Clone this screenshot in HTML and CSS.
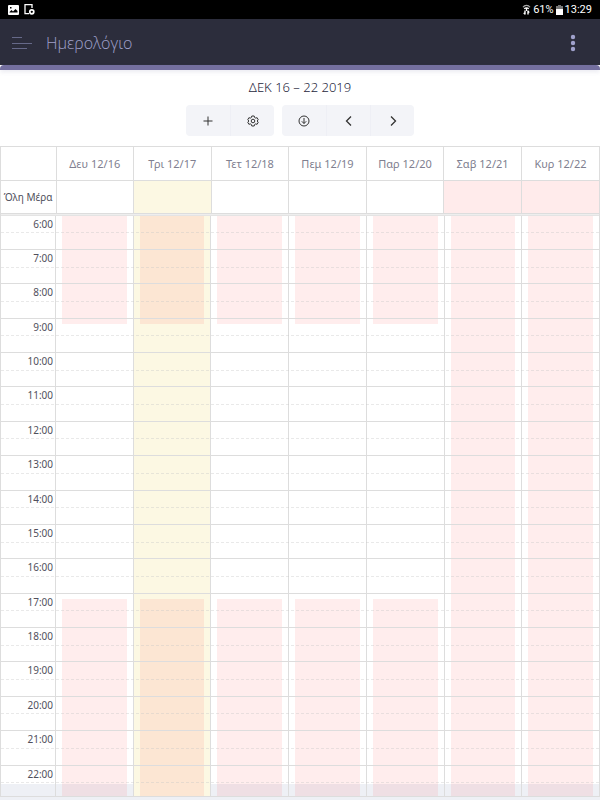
FILE: index.html
```html
<!DOCTYPE html>
<html lang="el">
<head>
  <meta charset="UTF-8">
  <meta name="viewport" content="width=device-width, initial-scale=1">
  <title>Ημερολόγιο</title>
  <link rel="stylesheet" href="styles.css">
</head>
<body>
  <div class="status-bar">
    <div class="status-left">
      <svg width="11" height="10" viewBox="0 0 11 10"><path fill="#fff" fill-rule="evenodd" d="M1 0h9a1 1 0 0 1 1 1v8a1 1 0 0 1-1 1H1a1 1 0 0 1-1-1V1a1 1 0 0 1 1-1zM1.500 7.500h8V6L7.500 4 5 6.500 3.500 5l-2 2zM2 2v1.500h1.500V2z"/></svg>
      <svg width="11" height="11" viewBox="0 0 11 11"><path fill="none" stroke="#fff" stroke-width="1.300" d="M8 4V.7H1v9h4"/><circle cx="7.800" cy="7.800" r="2" fill="none" stroke="#fff" stroke-width="1.700"/></svg>
    </div>
    <div class="status-right">
      <svg width="9" height="11" viewBox="0 0 9 11" fill="none" stroke="#fff"><path stroke="#aaa" stroke-width="1.200" d="M1 3.200C2.500.8 6.500.8 8 3.200"/><path stroke-width="1.300" d="M2.300 4.800c1-1.300 3.400-1.300 4.400 0M4.500 4.500v2.500"/><path stroke-width="1.400" d="M3 6.500v4M6 6.500v4M1.800 8.700 3 10.200M7.200 8.700 6 7"/></svg>
      <span>61%</span>
      <svg width="7" height="10" viewBox="0 0 7 10"><path fill="#777" d="M2 0h3v1h2v3H0V1h2z"/><path fill="#fff" d="M0 4h7v6H0z"/></svg>
      <span>13:29</span>
    </div>
  </div>
  <header class="app-bar">
    <button type="button" class="bar-button" aria-label="Μενού">
      <svg width="20" height="14" viewBox="0 0 20 14" stroke="#666989"><path d="M0 1.500h10M0 7.500h20M0 12.500h15"/></svg>
    </button>
    <h1>Ημερολόγιο</h1>
    <button type="button" class="bar-button" aria-label="Περισσότερα">
      <svg width="6" height="18" viewBox="0 0 6 18" fill="#a0a1cc"><circle cx="3" cy="3" r="2.200"/><circle cx="3" cy="9" r="2.200"/><circle cx="3" cy="15" r="2.200"/></svg>
    </button>
  </header>
  <main class="panel">
    <div class="accent"></div>
    <h2>ΔΕΚ 16 – 22 2019</h2>
    <div class="toolbar">
      <div class="button-group">
        <button type="button" aria-label="Προσθήκη"><svg width="12" height="12" viewBox="0 0 12 12"><path d="M6 1.500v9M1.500 6h9"/></svg></button>
        <button type="button" aria-label="Ρυθμίσεις"><svg width="12" height="12" viewBox="0 0 12 12"><path d="M4.800 1h2.400l.4 1.500 1.100.6 1.400-.4 1.100 2L10.200 6l1 1.300-1.100 2-1.400-.4-1.100.6-.4 1.500H4.800l-.4-1.500-1.100-.6-1.400.4-1.100-2L1.800 6l-1-1.300 1.100-2 1.400.4 1.100-.6z"/><circle cx="6" cy="6" r="1.800"/></svg></button>
      </div>
      <div class="button-group">
        <button type="button" aria-label="Σήμερα"><svg width="12" height="12" viewBox="0 0 12 12"><circle cx="6" cy="6" r="5"/><path d="M6 3v5.500M3.800 6.300 6 8.500l2.200-2.200"/></svg></button>
        <button type="button" aria-label="Προηγούμενη"><svg width="12" height="12" viewBox="0 0 12 12"><path stroke-width="1.300" d="M8 1.500 3.500 6 8 10.500"/></svg></button>
        <button type="button" aria-label="Επόμενη"><svg width="12" height="12" viewBox="0 0 12 12"><path stroke-width="1.300" d="M4 1.500 8.500 6 4 10.500"/></svg></button>
      </div>
    </div>
    <div class="calendar">
      <table class="days">
        <colgroup><col class="axis"><col span="7"></colgroup>
        <thead>
          <tr><td></td><th scope="col">Δευ 12/16</th><th scope="col">Τρι 12/17</th><th scope="col">Τετ 12/18</th><th scope="col">Πεμ 12/19</th><th scope="col">Παρ 12/20</th><th scope="col">Σαβ 12/21</th><th scope="col">Κυρ 12/22</th></tr>
        </thead>
        <tbody>
          <tr><th scope="row">Όλη Μέρα</th><td></td><td class="today"></td><td></td><td></td><td></td><td class="closed"></td><td class="closed"></td></tr>
        </tbody>
      </table>
      <div class="divider"></div>
      <div class="time-grid">
        <div class="grid-content">
          <div class="shades">
            <div class="day"><i class="early"></i><i class="late"></i></div>
            <div class="day today"><i class="early"></i><i class="late"></i></div>
            <div class="day"><i class="early"></i><i class="late"></i></div>
            <div class="day"><i class="early"></i><i class="late"></i></div>
            <div class="day"><i class="early"></i><i class="late"></i></div>
            <div class="day"><i class="all-day"></i></div>
            <div class="day"><i class="all-day"></i></div>
          </div>
          <div class="hours" id="hours"></div>
        </div>
      </div>
    </div>
  </main>
  <script>
    const hours = document.getElementById('hours');
    for (let h = 6; h <= 22; h++) {
      const row = document.createElement('div');
      row.className = 'hour';
      row.innerHTML = `<span>${h}:00</span>`;
      hours.appendChild(row);
    }
  </script>
</body>
</html>
```

FILE: styles.css
```css
* { box-sizing: border-box; }
body { margin: 0; height: 100vh; min-height: 640px; display: flex; flex-direction: column; overflow: hidden; background: #eef0f5; color: #50505c; font-family: "Noto Sans", "Open Sans", sans-serif; }
h1, h2 { margin: 0; }
button { padding: 0; border: 0; background: none; cursor: pointer; }
svg { display: block; }

.status-bar { height: 19px; padding: 0 8px; display: flex; justify-content: space-between; align-items: center; background: #000; color: #fff; font: 11px/18px Roboto, sans-serif; }
.status-left, .status-right { display: flex; align-items: center; }
.status-left { gap: 5px; }
.status-right { gap: 2px; }

.app-bar { height: 46px; padding: 2px 24px 0 12px; display: flex; align-items: center; background: #2c2d3c; color: #a0a1cc; }
.app-bar h1 { flex: 1; margin-left: 14px; font-family: "Open Sans", "Noto Sans", sans-serif; font-weight: 300; font-size: 16px; line-height: 24px; }

.panel { flex: 1; min-height: 0; margin-bottom: 16px; display: flex; flex-direction: column; background: #fff; }
.accent { height: 5px; border-radius: 4px 4px 0 0; background: #746f9f; box-shadow: 0 2px 4px rgba(116, 111, 159, .15); }
.panel h2 { margin-top: 7px; text-align: center; font-weight: 300; font-size: 13px; line-height: 20px; color: #26263c; }
.toolbar { margin: 8px 0 10px; display: flex; justify-content: center; gap: 8px; }
.button-group { display: flex; border-radius: 4px; overflow: hidden; background: #f3f4f8; }
.button-group button { width: 44px; height: 31px; display: flex; align-items: center; justify-content: center; }
.button-group button + button { border-left: 1px solid #eeeff5; }
.button-group svg { fill: none; stroke: #333; }

/* runs past the white panel onto the page background */
.calendar { flex: 1; min-height: 0; margin-bottom: -13px; display: flex; flex-direction: column; border: 1px solid #ddd; }
.days { width: 100%; table-layout: fixed; border-collapse: collapse; font-size: 11px; }
.days .axis { width: 55px; }
.days tr { height: 33px; }
.days th, .days td { padding: 0; font-weight: 400; border-left: 1px solid #ddd; border-bottom: 1px solid #ddd; color: #808090; }
.days tr > :first-child { border-left: 0; }
.days tbody th { padding-right: 3px; text-align: right; font-size: 10px; color: #50505c; white-space: nowrap; }
.divider { height: 1px; background: #eee; }

.time-grid { flex: 1; min-height: 0; overflow: hidden; border-top: 1px solid #e4e4e4; }
.grid-content { position: relative; height: calc(100% + 4px); }
.shades { height: 100%; padding-left: 54px; display: grid; grid-template-columns: repeat(7, 1fr); }
.day { position: relative; border-left: 1px solid #ddd; }
.today { background: #fcf8e3; }
.closed { background: #ffebeb; }
.day i { position: absolute; left: 6px; right: 6px; background: rgba(255, 75, 75, .1); }
.early { top: 0; height: 18.5%; }
.late { top: 65.6%; bottom: 0; }
.all-day { top: 0; bottom: 0; }

.hours { position: absolute; inset: 0; display: flex; flex-direction: column; }
.hour { flex: 1; position: relative; border-bottom: 1px solid #ddd; font-size: 10px; line-height: 17px; }
.hour span { display: block; width: 52px; text-align: right; }
.hour::after { content: ""; position: absolute; top: 50%; left: 0; right: 0; border-top: 1px dashed rgba(200, 200, 200, .4); }
```
